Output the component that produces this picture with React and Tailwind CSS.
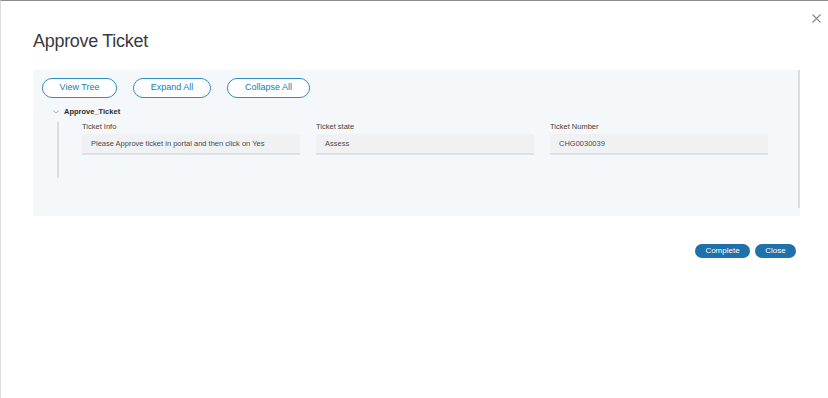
import { ChevronDown } from "lucide-react";

const fields = [
  { label: "Ticket Info", value: "Please Approve ticket in portal and then click on Yes" },
  { label: "Ticket state", value: "Assess" },
  { label: "Ticket Number", value: "CHG0030039" },
];

const treeButtons = [
  { text: "View Tree", w: "w-[75px]" },
  { text: "Expand All", w: "w-[78px]" },
  { text: "Collapse All", w: "w-[83px]" },
];

export default function App() {
  return (
    <div className="relative h-[398px] w-[828px] overflow-hidden border-t border-l border-t-[#8c8c8c] border-l-[#dcdcdc] bg-white font-['Liberation_Sans',Arial,sans-serif] text-[#39393b]">
      {/* close */}
      <button className="absolute right-[6px] top-[11px] flex h-[12px] w-[12px] items-center justify-center text-[#8a8a8a]">
        <svg width="9" height="9" viewBox="0 0 9 9" fill="none" stroke="currentColor" strokeWidth="1.1">
          <path d="M0.5 0.5 L8.5 8.5 M8.5 0.5 L0.5 8.5" />
        </svg>
      </button>

      <div className="pl-[32px] pr-[28px] pt-[29px]">
        <h1 className="text-[18px] font-light leading-[22px] tracking-[-0.3px] text-[#3a3a3c]">Approve Ticket</h1>

        <div className="relative mt-[18px] h-[146px] bg-[#f4f8fb] pl-[9px] pt-[8px]">
          {/* scrollbar */}
          <div className="absolute right-[0px] top-0 h-[138px] w-[2px] bg-[#d9dcdf]" />

          <div className="flex gap-[16px]">
            {treeButtons.map((b) => (
              <button
                key={b.text}
                className={`h-[20px] ${b.w} rounded-full border border-[#2f8cbf] bg-white text-[9px] font-medium text-[#1b7ab0]`}
              >
                {b.text}
              </button>
            ))}
          </div>

          <div className="mt-[8px] ml-[9px] flex items-center gap-[3px]">
            <ChevronDown className="h-[10px] w-[10px] text-[#55595e]" strokeWidth={1.3} />
            <span className="text-[7.5px] font-bold text-[#2b2b2d]">Approve_Ticket</span>
          </div>

          <div className="ml-[15px] mt-[5px] flex border-l-2 border-[#d6dee6] pb-[23px]">
            <div className="ml-[23px] grid w-[686px] grid-cols-3 gap-[16px]">
              {fields.map((f) => (
                <div key={f.label}>
                  <div className="text-[7.5px] leading-[10px] text-[#3f3f42]">{f.label}</div>
                  <div className="mt-[2px] flex h-[21px] items-center border-b-2 border-[#dde1e5] bg-[#f0f1f3] pl-[9px] text-[7.5px] text-[#4a4a4d]">
                    {f.value}
                  </div>
                </div>
              ))}
            </div>
          </div>
        </div>

        <div className="mt-[28px] flex justify-end gap-[5px] pr-[4px]">
          <button className="h-[14px] w-[55px] rounded-full bg-[#1e71a9] text-[8px] text-white">Complete</button>
          <button className="h-[14px] w-[41px] rounded-full bg-[#1e71a9] text-[8px] text-white">Close</button>
        </div>
      </div>
    </div>
  );
}
